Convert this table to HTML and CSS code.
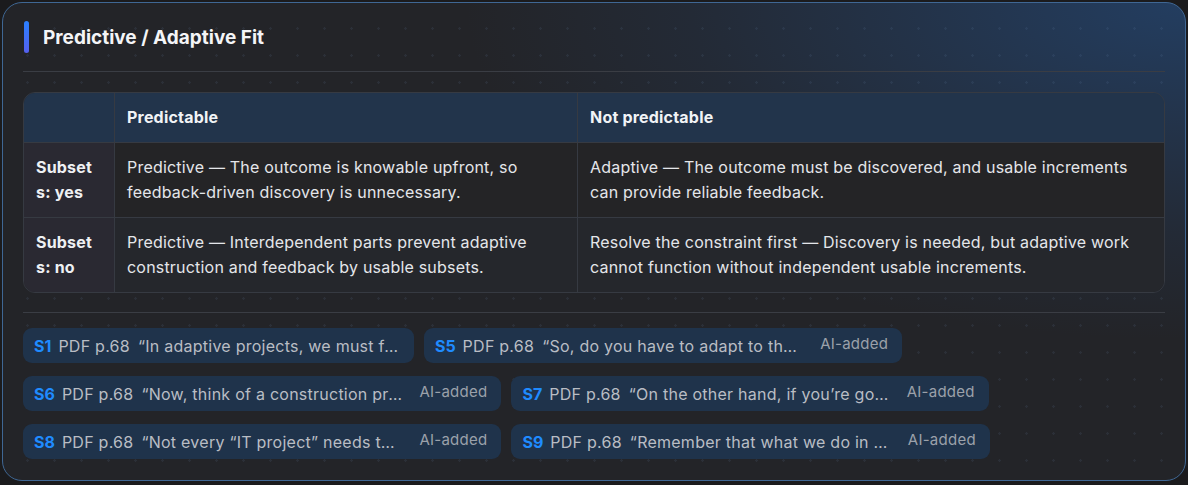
FILE: index.html
```html
<!DOCTYPE html>
<html lang="en">
<head>
    <meta charset="UTF-8">
    <title>Predictive / Adaptive Fit</title>
    <link rel="stylesheet" href="styles.css">
</head>
<body>
    <section class="card">
        <header class="card-head">
            <span class="accent"></span>
            <h2>Predictive / Adaptive Fit</h2>
        </header>

        <div class="table-wrap">
            <table class="fit-table">
                <thead>
                    <tr>
                        <th class="corner"></th>
                        <th class="col-a">Predictable</th>
                        <th>Not predictable</th>
                    </tr>
                </thead>
                <tbody>
                    <tr class="row-yes">
                        <th>Subsets: yes</th>
                        <td>Predictive — The outcome is knowable upfront, so feedback-driven discovery is unnecessary.</td>
                        <td>Adaptive — The outcome must be discovered, and usable increments can provide reliable feedback.</td>
                    </tr>
                    <tr class="row-no">
                        <th>Subsets: no</th>
                        <td>Predictive — Interdependent parts prevent adaptive construction and feedback by usable subsets.</td>
                        <td>Resolve the constraint first — Discovery is needed, but adaptive work cannot function without independent usable increments.</td>
                    </tr>
                </tbody>
            </table>
        </div>

        <div class="sources">
            <span class="chip"><b>S1</b><span class="page">PDF p.68</span><span class="quote">“In adaptive projects, we must focus on delivering usable increments</span></span>
            <span class="chip"><b>S5</b><span class="page">PDF p.68</span><span class="quote">“So, do you have to adapt to the environment</span><span class="tag">AI-added</span></span>
            <span class="chip"><b>S6</b><span class="page">PDF p.68</span><span class="quote">“Now, think of a construction project where</span><span class="tag">AI-added</span></span>
            <span class="chip"><b>S7</b><span class="page">PDF p.68</span><span class="quote">“On the other hand, if you’re going to build</span><span class="tag">AI-added</span></span>
            <span class="chip"><b>S8</b><span class="page">PDF p.68</span><span class="quote">“Not every “IT project” needs to be adaptive</span><span class="tag">AI-added</span></span>
            <span class="chip"><b>S9</b><span class="page">PDF p.68</span><span class="quote">“Remember that what we do in adaptive projects</span><span class="tag">AI-added</span></span>
        </div>
    </section>
</body>
</html>
```

FILE: styles.css
```css
body {
    margin: 0;
    padding: 2px;
    background: #1b1b1d;
    font-family: 'Inter', 'Noto Sans', sans-serif;
    color: #e6e8ec;
}

.card {
    height: 479px;
    box-sizing: border-box;
    border: 1.5px solid #3f6794;
    border-radius: 20px;
    padding: 18px 20px 0;
    background-color: #232428;
    background-image:
        radial-gradient(circle, rgba(120, 150, 190, 0.10) 1px, transparent 1.5px),
        radial-gradient(ellipse 900px 420px at 100% 0%, rgba(35, 70, 115, 0.75), rgba(35, 60, 95, 0.25) 55%, transparent 80%);
    background-size: 27px 27px, 100% 100%;
    background-position: 11px 12px, 0 0;
}

.card-head {
    display: flex;
    align-items: center;
    gap: 14px;
    padding-bottom: 18px;
    border-bottom: 1px solid #3a3d44;
}

.accent {
    width: 5px;
    height: 32px;
    border-radius: 3px;
    background: linear-gradient(#2a80ff, #5560ee);
    margin-left: 1px;
}

.card-head h2 {
    margin: 0;
    font-size: 19px;
    font-weight: 700;
    color: #f4f5f7;
}

.table-wrap {
    margin-top: 20px;
    border: 1px solid #363a42;
    border-radius: 12px;
    overflow: hidden;
}

.fit-table {
    width: 100%;
    border-collapse: collapse;
    font-size: 16px;
    line-height: 25px;
    letter-spacing: 0.2px;
}

.fit-table th,
.fit-table td {
    text-align: left;
    vertical-align: middle;
    padding: 12px 12px;
    border: 1px solid #363a42;
}

.fit-table tr > :first-child { border-left: none; }
.fit-table tr > :last-child { border-right: none; }
.fit-table thead th { border-top: none; height: 25px; }
.fit-table tbody tr:last-child > * { border-bottom: none; }

.fit-table thead th {
    background: #22344b;
    font-weight: 700;
    color: #f1f3f6;
}

.fit-table .corner { width: 66px; }
.fit-table .col-a { width: 438px; }

.fit-table tbody th {
    background: #2a2932;
    font-weight: 700;
    color: #eef0f3;
    word-break: break-all;
}

.row-yes td { background: #242426; color: #e4e6ea; }
.row-no td { background: #25272c; color: #e4e6ea; }

.sources {
    margin-top: 19px;
    border-top: 1px solid #3a3d44;
    padding-top: 15px;
    display: flex;
    flex-wrap: wrap;
    gap: 13px 10px;
}

.chip {
    display: inline-flex;
    align-items: center;
    height: 35px;
    padding: 0 14px 0 11px;
    border-radius: 9px;
    background: #1f334b;
    font-size: 16px;
    letter-spacing: 0.25px;
    color: #b9bdc4;
    white-space: nowrap;
}

.chip b {
    color: #1f8bff;
    font-weight: 700;
    letter-spacing: 0;
}

.page {
    margin-left: 7px;
}

.quote {
    margin-left: 8px;
    display: inline-block;
    max-width: 262px;
    overflow: hidden;
    text-overflow: ellipsis;
}

.tag {
    margin-left: 16px;
    font-size: 15px;
    color: #9ba1aa;
    position: relative;
    top: -2px;
}
```
